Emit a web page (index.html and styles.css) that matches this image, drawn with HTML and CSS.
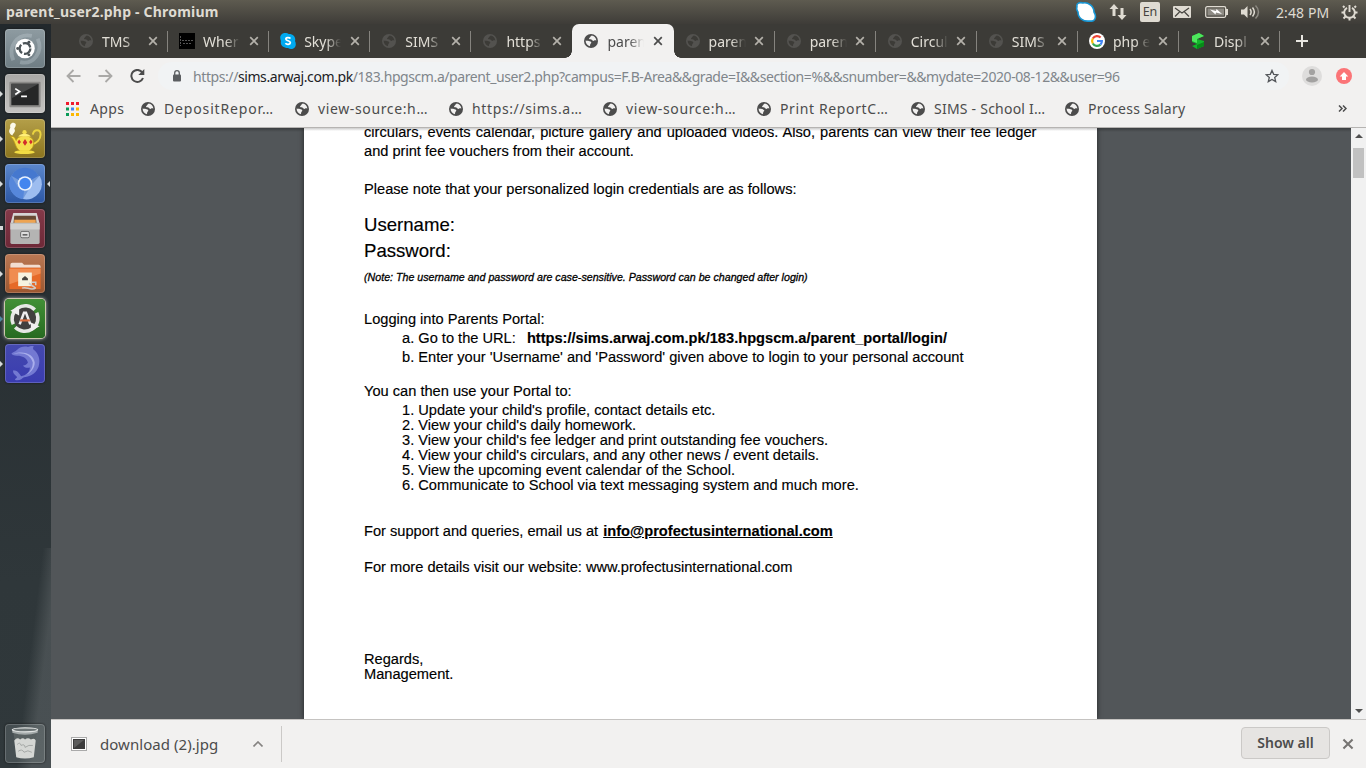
FILE: index.html
```html
<!DOCTYPE html>
<html lang="en">
<head>
<meta charset="utf-8">
<title>parent_user2.php - Chromium</title>
<link rel="stylesheet" href="styles.css">
</head>
<body>
<svg class="defs" width="0" height="0" aria-hidden="true">
  <symbol id="globe" viewBox="0 0 14 14">
    <circle cx="7" cy="7" r="7" fill="currentColor"/>
    <path class="land" d="M7.800 1.600C6.600 2 6.900 2.900 5.900 3.400 4.800 3.800 4.800 4.800 5.700 5.200c1 .4 2.100 .2 2.600 1 .3.8 1.400 .9 1.900.3.5-.6 1.200-.2 2.200-.1C12 3.600 10 1.700 7.800 1.600zM1.600 6.600c.9.3 2.200 0 3.300.5.9.5 2.200.3 2.400 1.300.1.9-1.100 1-1.100 2 0 .8-.4 1.200-.2 1.900C3.400 11.700 1.500 9.400 1.600 6.600z"/>
  </symbol>
  <symbol id="close" viewBox="0 0 10 10"><path d="M1.200 1.200l7.600 7.600M8.800 1.200L1.200 8.800" stroke="currentColor" stroke-width="1.700" fill="none"/></symbol>
</svg>

<header class="panel">
  <span class="panel-title">parent_user2.php - Chromium</span>
  <div class="tray">
    <svg class="t-skype" width="22" height="22" viewBox="0 0 22 22"><path d="M2 6C1 2 5 1 8 2c5-1 11 3 11 9 3 5 1 10-4 9C8 21 3 17 3 11 2 9 1 8 2 6z" fill="#fff" stroke="#1795d3" stroke-width="1.600"/></svg>
    <svg class="t-net" width="18" height="18" viewBox="0 0 18 18" fill="#dfdbd2"><path d="M5 1l4.500 5H6.500v7h-3V6H.500zM13 17L8.500 12h3V5h3v7h3z"/></svg>
    <span class="t-lang">En</span>
    <svg class="t-mail" width="18" height="12" viewBox="0 0 18 12"><rect width="18" height="12" rx="1" fill="#dfdbd2"/><path d="M2 2l7 5 7-5M2 10.500l4.500-4.500M16 10.500L11.500 6" stroke="#46443f" stroke-width="1.200" fill="none"/></svg>
    <svg class="t-bat" width="24" height="12" viewBox="0 0 24 12"><rect x=".7" y=".7" width="20" height="10.600" rx="1.500" fill="none" stroke="#dfdbd2" stroke-width="1.300"/><path d="M22 3v6" stroke="#dfdbd2" stroke-width="2"/><rect x="2.500" y="2.500" width="16.500" height="7" fill="#8e8b84"/><path d="M5 3.500l6 1.500.5-2 5.500 5-6-1.500-.5 2z" fill="#fff"/></svg>
    <svg class="t-vol" width="20" height="16" viewBox="0 0 20 16" fill="none" stroke="#dfdbd2" stroke-width="1.500"><path d="M1 5.500h3L7.500 2v12L4 10.500H1z" fill="#dfdbd2" stroke="none"/><path d="M10 5c1.500 2 1.500 4 0 6M12.500 3.500c2.500 3 2.500 6 0 9"/><path d="M15.500 1.500c4 4 4 9 0 13" stroke="#8b8880"/></svg>
    <span class="clock">2:48 PM</span>
    <svg class="t-gear" width="17" height="17" viewBox="0 0 17 17" fill="none" stroke="#dfdbd2"><path d="M6 3.800a5.300 5.300 0 1 0 5 0" stroke-width="1.900"/><path d="M8.500 1v7" stroke-width="1.900"/><path d="M3.500 3.500L2 2M13.500 3.500L15 2M3 8.500H.500M14 8.500h2.500M4.500 12.500L2.500 14.500M12.500 12.500l2 2M8.500 14v2.500" stroke-width="2"/></svg>
  </div>
</header>

<div class="desktop">
  <nav class="launcher">
    <div class="app dash"><svg viewBox="0 0 40 40"><path d="M8 32C2 18 12 4 27 7M33 10c6 13-4 27-18 24" stroke="#c3ced3" stroke-width="4" opacity=".35" fill="none"/><circle cx="20" cy="20" r="10" fill="#fff"/><circle cx="20" cy="20" r="5.500" fill="none" stroke="#4b5357" stroke-width="2.400" stroke-dasharray="9.500 2"/><g fill="#4b5357"><circle cx="12.500" cy="20" r="1.500"/><circle cx="24" cy="13.500" r="1.500"/><circle cx="24" cy="26.500" r="1.500"/></g></svg></div>
    <div class="app term run"><svg viewBox="0 0 40 40"><rect x="4" y="8" width="32" height="26" rx="1" fill="#8b8a88"/><rect x="6" y="10" width="28" height="22" fill="#262727"/><path d="M6 10h28L6 25z" fill="#474848"/><path d="M10 15l4.500 3-4.500 3M16 23h6" stroke="#fff" stroke-width="1.700" fill="none"/></svg></div>
    <div class="app tea run"><svg viewBox="0 0 40 40"><path d="M7 17c-5-3-3-6-2-8-1-3 1-6 4-5 3 1 1 4 0 6 2 3-1 4-2 7z" fill="#fbf9ea"/><path d="M28 16c1-6 8-6 8 0 0 5-4 9-9 10" fill="none" stroke="#ead33f" stroke-width="2"/><path d="M5 18c5-1 5 3 6 4 1-5 13-7 17-1 2 6 0 9-4 12h-9c-6-4-4-10-10-15z" fill="#f4de4d" stroke="#c39c12" stroke-width=".8"/><circle cx="19.500" cy="13.500" r="2.200" fill="#f4de4d"/><path d="M13 18c2-4 11-4 13 0z" fill="#ffef79"/><ellipse cx="19.500" cy="34" rx="10.500" ry="2" fill="#f2dc43"/><path d="M14 21l1.800 2.500L14 26l-1.800-2.500zM20 20.500l2.300 3.500-2.300 3.500-2.300-3.500zM26 21l1.800 2.500L26 26l-1.800-2.500z" fill="#d22d2c"/></svg></div>
    <div class="app chr run active"><svg viewBox="0 0 40 40"><circle cx="20" cy="20" r="16" fill="#739bdc"/><path d="M20 20L6 12a16 16 0 0 1 28 0z" fill="#4578cf"/><path d="M20 20l-7 4L6 12a16 16 0 0 0 12 24z" fill="#5687db"/><path d="M27 21l8-9a16 16 0 0 1-17 24z" fill="#9dbdf0"/><circle cx="20" cy="20" r="7.500" fill="#e9f1fd"/><circle cx="20" cy="20" r="5.800" fill="#4385ef"/></svg></div>
    <div class="app files run"><svg viewBox="0 0 40 40"><path d="M8 4h24l3 11H5z" fill="#d6d5d4"/><path d="M9 7h22l1 9H8z" fill="#684a34"/><path d="M9 11h22v5H9z" fill="#eea452"/><path d="M5 14h30v20q0 2-2 2H7q-2 0-2-2z" fill="#b4b4b3"/><path d="M5 15h30v6H5z" fill="#d0d0cf"/><rect x="15.500" y="23" width="9" height="6.500" rx="1.500" fill="#ddd" stroke="#6a6a6a"/><path d="M17.500 26.500h5" stroke="#555" stroke-width="1.500"/></svg></div>
    <div class="app folder run"><svg viewBox="0 0 40 40"><path d="M5 14v-3q0-2 2-2h10l2 2h15q2 0 2 2v1z" fill="#f2ddd0"/><rect x="4" y="14" width="32" height="22" rx="1" fill="#e66a28"/><path d="M4 15h32v5L4 31z" fill="#f08c50"/><rect x="13" y="19" width="14" height="14" fill="#f6f2df"/><path d="M17 27v-2l3-2.500 3 2.500v2z" fill="#46443e"/><path d="M17 35c5-2 8 3 14 0M24 30l7 5M27 29h4v3" stroke="#ccc" stroke-width="1.600" fill="none"/></svg></div>
    <div class="app upd run"><svg viewBox="0 0 40 40"><circle cx="20" cy="20" r="11.500" fill="#41403e"/><path d="M8 26A13.500 13.500 0 0 1 30 11M32 14A13.500 13.500 0 0 1 10 29" fill="none" stroke="#e7e7e5" stroke-width="3.600"/><path d="M5 12l9-5v10zM35 28l-9 5V24z" fill="#f0f0ef"/><path d="M14.500 26l4.500-12h2l4.500 12" stroke="#eee" stroke-width="2.600" fill="none"/><path d="M15 22h10" stroke="#db6b3b" stroke-width="2.200"/></svg></div>
    <div class="app dol run"><svg viewBox="0 0 40 40"><path d="M6 10c2-2 4-2 6-4 3-3 7-4 11-3 2-1 4-1 6-1-1 2-1 3 0 4 5 4 7 10 5 17-2 6-7 10-15 11-2 1-4 4-9 3-1-1 1-2 2-3-2-2-5-4-4-7 4 0 6 3 8 6 5-1 9-4 9-9-3 1-6 0-7-2 2 0 4-1 5-3-1-4-4-6-9-7-3 0-6 0-8-2z" fill="#7379d2"/><path d="M8 10c10-2 18 1 20 9 0 5-2 9-6 12 3-1 8-6 8-12C29 11 20 6 8 10z" fill="#a9aeec"/></svg></div>
    <div class="app trash"><svg viewBox="0 0 40 40"><path d="M8 8l4 27h16l4-27z" fill="#596162"/><path d="M9 17q3-4 6-1 3-3 5 0 3-3 6 0 4-2 5 1l-2 17q-9 3-18 0z" fill="#d5d7d4"/><path d="M12 21q3-3 4 1 4-2 4 2 4-3 8-2M13 28q4-3 6 1 4-3 8 0" stroke="#a3a7a5" fill="none"/><path d="M7 6h26v3q-13 4-26 0z" fill="#a4aaaa"/><ellipse cx="20" cy="6" rx="13" ry="2" fill="#6c7475" stroke="#e0e3e2" stroke-width="1.200"/></svg></div>
  </nav>

  <main class="browser">
    <div class="tabs">
      <div class="tab"><svg class="fav"><use href="#globe"/></svg><span class="tt">TMS</span><svg class="x"><use href="#close"/></svg></div>
      <div class="tab"><svg class="fav sq" viewBox="0 0 16 16"><path d="M0 0h16v16H0z" fill="#000"/><path d="M1.500 3v10M3 7.500h12M4 10.500h9" stroke="#555" stroke-dasharray="2 1"/></svg><span class="tt">Wher</span><svg class="x"><use href="#close"/></svg></div>
      <div class="tab"><svg class="fav sq" viewBox="0 0 16 16"><path d="M5 0c2 0 3 .5 4 1 5 0 7 4 6 7 2 4 0 8-4 8-1 0-2-.5-3-1-5 0-8-3-7-7C-1 4 1 0 5 0z" fill="#00a9f0"/><path d="M10.500 5.500C9 4 5.700 4.400 5.900 6.300 6 8.200 10.500 7.400 10.400 9.700c-.2 2-3.700 2.200-5 .5" stroke="#fff" stroke-width="1.700" fill="none"/></svg><span class="tt">Skype</span><svg class="x"><use href="#close"/></svg></div>
      <div class="tab"><svg class="fav"><use href="#globe"/></svg><span class="tt">SIMS</span><svg class="x"><use href="#close"/></svg></div>
      <div class="tab last"><svg class="fav"><use href="#globe"/></svg><span class="tt">https</span><svg class="x"><use href="#close"/></svg></div>
      <div class="tab on"><svg class="fav"><use href="#globe"/></svg><span class="tt">paren</span><svg class="x"><use href="#close"/></svg></div>
      <div class="tab"><svg class="fav"><use href="#globe"/></svg><span class="tt">paren</span><svg class="x"><use href="#close"/></svg></div>
      <div class="tab"><svg class="fav"><use href="#globe"/></svg><span class="tt">paren</span><svg class="x"><use href="#close"/></svg></div>
      <div class="tab"><svg class="fav"><use href="#globe"/></svg><span class="tt">Circul</span><svg class="x"><use href="#close"/></svg></div>
      <div class="tab"><svg class="fav"><use href="#globe"/></svg><span class="tt">SIMS</span><svg class="x"><use href="#close"/></svg></div>
      <div class="tab"><svg class="fav sq" viewBox="0 0 16 16"><circle cx="8" cy="8" r="8" fill="#fff"/><g fill="none" stroke-width="2.200"><path d="M11.600 4.600A4.900 4.900 0 0 0 3.800 5.500" stroke="#ea4335"/><path d="M3.800 5.500a4.900 4.900 0 0 0 0 5" stroke="#fbbc05"/><path d="M3.800 10.500a4.900 4.900 0 0 0 7.600 1.100" stroke="#34a853"/><path d="M11.400 11.600A4.900 4.900 0 0 0 12.900 8H8" stroke="#4285f4"/></g></svg><span class="tt">php e</span><svg class="x"><use href="#close"/></svg></div>
      <div class="tab"><svg class="fav sq" viewBox="0 0 16 16"><path d="M2 3l7-3 5 3-7 3 7 2v5l-7 3-5-3 5-2-5-2z" fill="#12b52c"/><path d="M2 3l7-3 5 3-7 3v4L2 8z" fill="#4de65c"/><path d="M7 16l7-3V9l-7 3z" fill="#078a18"/></svg><span class="tt">Displ</span><svg class="x"><use href="#close"/></svg></div>
      <svg class="plus" width="12" height="12" viewBox="0 0 12 12"><path d="M6 0v12M0 6h12" stroke="#e8e6e0" stroke-width="2"/></svg>
    </div>

    <div class="toolbar">
      <svg class="nav-i" width="15" height="14" viewBox="0 0 15 14"><path d="M14.500 7H2M7.500 1L1.500 7l6 6" fill="none" stroke="#aaa9a7" stroke-width="1.800"/></svg>
      <svg class="nav-i" width="15" height="14" viewBox="0 0 15 14"><path d="M.500 7H13M7.500 1l6 6-6 6" fill="none" stroke="#aaa9a7" stroke-width="1.800"/></svg>
      <svg class="nav-i" width="15" height="14" viewBox="0 0 15 14"><path d="M12.300 3.500A6 6 0 1 0 13 9" fill="none" stroke="#4c4c4c" stroke-width="2"/><path d="M14.300 0v6H8.300z" fill="#4c4c4c"/></svg>
      <div class="omni">
        <svg width="10" height="12" viewBox="0 0 10 12"><rect x="1" y="4.500" width="8" height="7" rx="1" fill="#5b5e61"/><path d="M2.700 5V3a2.300 2.300 0 0 1 4.600 0v2" fill="none" stroke="#5b5e61" stroke-width="1.300"/></svg>
        <span class="url">https://<b>sims.arwaj.com.pk</b>/183.hpgscm.a/parent_user2.php?campus=F.B-Area&amp;&amp;grade=I&amp;&amp;section=%&amp;&amp;snumber=&amp;&amp;mydate=2020-08-12&amp;&amp;user=96</span>
        <svg class="star" width="14" height="14" viewBox="0 0 14 14"><path d="M7 1.400l1.700 3.900 4.200.4-3.200 2.800 1 4.100L7 10.400l-3.700 2.200 1-4.100L1.100 5.700l4.200-.4z" fill="none" stroke="#53565a" stroke-width="1.300"/></svg>
      </div>
      <svg class="user" width="20" height="20" viewBox="0 0 20 20"><circle cx="10" cy="10" r="10" fill="#dedddc"/><circle cx="10" cy="6" r="3.100" fill="#a3a2a1"/><ellipse cx="10" cy="13.500" rx="6" ry="3" fill="#a3a2a1"/></svg>
      <svg class="upg" width="16" height="16" viewBox="0 0 16 16"><circle cx="8" cy="8" r="8" fill="#fb7477"/><path d="M8 4l4.300 4.500H10V12H6V8.500H3.700z" fill="#fff"/></svg>
    </div>

    <div class="bookmarks">
      <span class="bm apps"><svg width="14" height="14" viewBox="0 0 14 14"><path d="M0 1.500h14" stroke="#f01b2d" stroke-width="3" stroke-dasharray="3 2"/><path d="M0 7h3" stroke="#0a9b58" stroke-width="3"/><path d="M5 7h3" stroke="#4285f4" stroke-width="3"/><path d="M10 7h3" stroke="#fcb800" stroke-width="3"/><path d="M0 12.500h3" stroke="#0a9b58" stroke-width="3"/><path d="M5 12.500h8" stroke="#fcb800" stroke-width="3" stroke-dasharray="3 2"/></svg><span>Apps</span></span>
      <span class="bm b1"><svg class="fav"><use href="#globe"/></svg><span>DepositRepor…</span></span>
      <span class="bm b2"><svg class="fav"><use href="#globe"/></svg><span>view-source:h…</span></span>
      <span class="bm b3"><svg class="fav"><use href="#globe"/></svg><span>https://sims.a…</span></span>
      <span class="bm b4"><svg class="fav"><use href="#globe"/></svg><span>view-source:h…</span></span>
      <span class="bm b5"><svg class="fav"><use href="#globe"/></svg><span>Print ReportC…</span></span>
      <span class="bm b6"><svg class="fav"><use href="#globe"/></svg><span>SIMS - School I…</span></span>
      <span class="bm b7"><svg class="fav"><use href="#globe"/></svg><span>Process Salary</span></span>
      <svg class="more" width="9" height="7" viewBox="0 0 9 7"><path d="M1 .5l3 3-3 3M5 .5l3 3-3 3" fill="none" stroke="#4c4c4c" stroke-width="1.500"/></svg>
    </div>

    <div class="viewport">
      <article class="page">
        <p class="just">circulars, events calendar, picture gallery and uploaded videos. Also, parents can view their fee ledger</p>
        <p>and print fee vouchers from their account.</p>
        <p class="gap19">Please note that your personalized login credentials are as follows:</p>
        <div class="creds"><p>Username:</p><p>Password:</p></div>
        <p class="note">(Note: The username and password are case-sensitive. Password can be changed after login)</p>
        <p class="login">Logging into Parents Portal:</p>
        <p class="in">a. Go to the URL: <b class="link">https://sims.arwaj.com.pk/183.hpgscm.a/parent_portal/login/</b></p>
        <p class="in">b. Enter your 'Username' and 'Password' given above to login to your personal account</p>
        <p class="use">You can then use your Portal to:</p>
        <div class="list">
          <p>1. Update your child's profile, contact details etc.</p>
          <p>2. View your child's daily homework.</p>
          <p>3. View your child's fee ledger and print outstanding fee vouchers.</p>
          <p>4. View your child's circulars, and any other news / event details.</p>
          <p>5. View the upcoming event calendar of the School.</p>
          <p>6. Communicate to School via text messaging system and much more.</p>
        </div>
        <p class="support">For support and queries, email us at <b class="mail">info@profectusinternational.com</b></p>
        <p class="web">For more details visit our website: www.profectusinternational.com</p>
        <div class="sign"><p>Regards,</p><p>Management.</p></div>
      </article>
      <div class="scroll"><i class="up"></i><i class="thumb"></i><i class="down"></i></div>
    </div>

    <footer class="downloads">
      <svg class="file" width="16" height="14" viewBox="0 0 16 14"><rect x=".5" y=".5" width="15" height="13" fill="#fff" stroke="#aaa"/><rect x="2" y="2" width="12" height="10" fill="#3c3c3c"/><path d="M3 11V3h10z" fill="#5c5c5c"/></svg>
      <span class="fname">download (2).jpg</span>
      <svg class="chev" width="10" height="6" viewBox="0 0 10 6"><path d="M.500 5.500L5 1l4.500 4.500" fill="none" stroke="#858381" stroke-width="1.600"/></svg>
      <i class="sep"></i>
      <span class="showall">Show all</span>
      <svg class="x" viewBox="0 0 10 10"><use href="#close"/></svg>
    </footer>
  </main>
</div>
</body>
</html>
```
FILE: styles.css
```css
* { box-sizing: border-box; }
html, body { margin: 0; height: 100%; overflow: hidden; }
body { width: 1366px; height: 768px; display: flex; flex-direction: column; font-family: "Noto Sans", "Open Sans", sans-serif; font-size: 14px; color: #4c4c4c; white-space: nowrap; }
p { margin: 0; }
svg { display: block; flex: none; }
.defs { position: absolute; }

.panel { height: 24px; flex: none; display: flex; align-items: center; justify-content: space-between; padding: 0 8px 0 6px; background: linear-gradient(#5e5b50, #3e3c38); color: #dfdbd2; }
.panel-title { font-size: 14px; font-weight: 700; line-height: 24px; letter-spacing: .2px; }
.tray { display: flex; align-items: center; height: 24px; }
.t-net { margin-left: 12px; }
.t-lang { width: 20px; height: 20px; margin-left: 13px; border-radius: 2px; background: #dfdbd2; color: #46443f; font-size: 12.5px; line-height: 20px; text-align: center; }
.t-mail { margin-left: 13px; }
.t-bat { margin-left: 14px; }
.t-vol { margin-left: 11px; }
.clock { width: 53px; margin-left: 16px; font-size: 14px; letter-spacing: .1px; }
.t-gear { margin-left: 12px; }

.desktop { flex: 1; min-height: 0; display: flex; }
.launcher { width: 51px; flex: none; display: flex; flex-direction: column; gap: 6px; padding: 5px 0 5px 5px; background: linear-gradient(97deg, transparent 55%, rgba(255,255,255,.12) 75%) bottom / 100% 220px no-repeat, linear-gradient(#22282c, #2f373a 75%, #30383b); }
.app { position: relative; width: 40px; height: 39px; flex: none; border-radius: 4px; box-shadow: inset 0 0 0 1px rgba(255,255,255,.18), 0 0 2px #111; }
.app svg { width: 40px; height: 39px; }
.run::before { content: ""; position: absolute; left: -5px; top: 17px; border: 3px solid transparent; border-left-color: #d6d9da; border-right: 0; }
.files.run::before { width: 3px; height: 4px; border: 0; background: #d6d9da; }
.upd.run::before { border-left-color: #4f89a0; }
.active::after { content: ""; position: absolute; left: 42px; top: 17px; border: 3px solid transparent; border-right-color: #d6d9da; border-left: 0; }
.dash { background: linear-gradient(#8e9ba1, #6f7d84); }
.term { background: linear-gradient(#aaa9a7, #c4c3c1); }
.tea { background: linear-gradient(#b49f49, #8b741e); }
.chr { background: linear-gradient(#5b87cc, #2c57a4); }
.files { background: linear-gradient(#843a49, #6d2837); }
.folder { background: linear-gradient(#b97854, #9c5730); }
.upd { background: linear-gradient(#429036, #276b21); box-shadow: 0 0 0 1px #cdc8ad, 0 0 4px #fff; }
.dol { background: linear-gradient(#4449ae, #3a3cb0); }
.trash { margin-top: auto; background: rgba(200,215,215,.15); }

.browser { flex: 1; min-width: 0; display: flex; flex-direction: column; background: #f2f1f0; }
.tabs { height: 34px; flex: none; display: flex; align-items: center; padding-left: 16px; background: #3c3b37; color: #e2dfd7; }
.tab { position: relative; width: 101.100px; height: 34px; flex: none; display: flex; align-items: center; padding-left: 12px; }
.tab::after { content: ""; position: absolute; right: 0; top: 7px; width: 1px; height: 21px; background: #85837e; }
.tab.last::after, .tab.on::after { background: none; }
.fav { width: 14px; height: 14px; }
.fav.sq { width: 16px; height: 16px; margin: 0 -1px; }
.fav { --land: #f2f1f0; }
.tab .fav { --land: #3c3b37; color: #53524f; }
.tab.on .fav { --land: #f2f1f0; color: #4c4c4c; }
.land { fill: var(--land); }
.tt { width: 37px; margin-left: 9px; overflow: hidden; -webkit-mask-image: linear-gradient(90deg, #000 60%, transparent); }
.x { width: 10px; height: 10px; color: #b4b1aa; }
.tab .x { margin-left: 8.500px; }
.on { background: #f2f1f0; color: #4c4c4c; border-radius: 7px 7px 0 0; }
.on .x { color: #4c4c4c; }
.on::before { content: ""; position: absolute; left: -7px; right: -7px; bottom: 0; height: 7px; background: radial-gradient(circle at 0 0, transparent 6.500px, #f2f1f0 7px) left / 7px 7px no-repeat, radial-gradient(circle at 100% 0, transparent 6.500px, #f2f1f0 7px) right / 7px 7px no-repeat; }
.plus { margin-left: 16px; }

.toolbar { height: 36px; flex: none; display: flex; align-items: center; padding-left: 15px; }
.nav-i { margin-right: 17px; }
.omni { width: 1131px; height: 28px; margin-left: -4px; display: flex; align-items: center; padding: 0 10px 0 14px; border-radius: 14px; background: #f1f3f4; }
.url { margin-left: 11px; color: #80868b; font-size: 14px; letter-spacing: -.415px; }
.url b { font-weight: 400; color: #202124; }
.star { margin-left: auto; }
.user { margin-left: 13px; }
.upg { margin-left: 14px; }

.bookmarks { height: 34px; flex: none; display: flex; align-items: center; padding: 0 19px 4px 15px; border-bottom: 1px solid #b6b4b2; }
.bm { display: flex; align-items: center; width: 154px; gap: 9px; }
.apps { width: 75px; gap: 10px; letter-spacing: .4px; }
.b1 { letter-spacing: .85px; }
.b2, .b3, .b4, .b5 { letter-spacing: .63px; }
.b6, .b7 { letter-spacing: .23px; }
.more { margin-left: auto; }

.viewport { flex: 1; min-height: 0; display: flex; overflow: hidden; background: linear-gradient(#3b3e40, #525659 4px); }
.page { width: 793px; height: 591px; margin-left: 253px; padding-left: 60px; background: linear-gradient(#ccc, #fff 3px); box-shadow: 0 0 5px rgba(0,0,0,.6); color: #000; font-family: "Liberation Sans", Arial, sans-serif; font-size: 14.640px; -webkit-text-stroke: .15px #000; overflow: hidden; }
.page p { line-height: 19px; }
.just { width: 672.500px; margin-top: -5px; white-space: normal; text-align-last: justify; }
.gap19 { margin-top: 19px; }
.creds { margin-top: 13px; font-size: 18.600px; }
.page .creds p { line-height: 26px; }
.page .note { margin-top: 4px; font-size: 10.660px; font-style: italic; line-height: 19px; -webkit-text-stroke: .3px #000; }
.page .login { margin-top: 23px; }
.in { padding-left: 38px; }
.link { margin-left: 7px; }
.use { margin-top: 15px; }
.list { padding-left: 38px; margin-top: 2px; }
.page .list p, .page .sign p { line-height: 15px; }
.support { margin-top: 29px; }
.mail { margin-left: 1px; text-decoration: underline; }
.web { margin-top: 17px; }
.sign { margin-top: 75px; }
.scroll { width: 15px; margin-left: auto; display: flex; flex-direction: column; align-items: center; background: #f1f1f1; }
.up { margin-top: 6px; border: 4px solid transparent; border-top: 0; border-bottom-color: #505050; }
.thumb { width: 11px; height: 30px; margin-top: 10px; background: #c1c1c1; }
.down { margin: auto 0 6px; border: 4px solid transparent; border-bottom: 0; border-top-color: #505050; }

.downloads { height: 49px; flex: none; display: flex; align-items: center; padding: 0 12px 0 20px; border-top: 1px solid #c5c3c1; }
.file { margin-bottom: 1px; }
.fname { width: 118px; margin-left: 13px; font-size: 15px; letter-spacing: .05px; }
.chev { margin-left: 35px; }
.sep { width: 1px; height: 36px; margin-left: 18px; background: #cbc9c7; }
.showall { width: 89px; height: 32px; margin: 0 12px 2px auto; border: 1px solid #cbc9c7; border-radius: 4px; background: #e6e4e2; font-weight: 600; line-height: 29px; text-align: center; }
.downloads .x { width: 12px; height: 12px; color: #767472; }
```
